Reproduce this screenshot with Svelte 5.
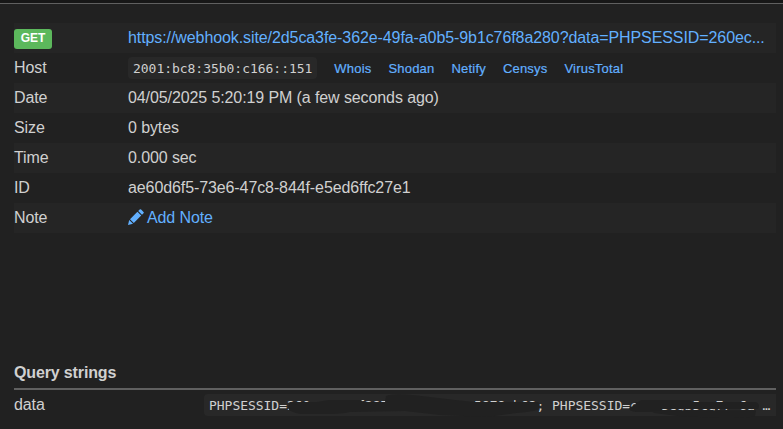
<script>
  const lookups = ['Whois', 'Shodan', 'Netify', 'Censys', 'VirusTotal'];
  const details = [
    ['Date', '04/05/2025 5:20:19 PM (a few seconds ago)'],
    ['Size', '0 bytes'],
    ['Time', '0.000 sec'],
    ['ID', 'ae60d6f5-73e6-47c8-844f-e5ed6ffc27e1']
  ];
  const value = 'PHPSESSID=260      f297   e       5979 b62; PHPSESSID=c  r5egb5cq7r 6a …';
</script>

<main>
  <div class="top"></div>
  <section class="details">
    <div class="row">
      <div class="label"><span class="badge">GET</span></div>
      <a class="url" href="#request">https://webhook.site/2d5ca3fe-362e-49fa-a0b5-9b1c76f8a280?data=PHPSESSID=260ec...</a>
    </div>
    <div class="row">
      <div class="label">Host</div>
      <div class="host">
        <code>2001:bc8:35b0:c166::151</code>
        {#each lookups as name}<a class="lookup" href="#lookup">{name}</a>{/each}
      </div>
    </div>
    {#each details as [label, text]}
      <div class="row"><div class="label">{label}</div><div>{text}</div></div>
    {/each}
    <div class="row">
      <div class="label">Note</div>
      <a class="note" href="#note">
        <svg width="16" height="16" viewBox="0 0 16 16" fill="currentColor"><path d="M0 16 1.2 11 5 14.8ZM2 10.2 9.4 2.8 13.2 6.6 5.8 14ZM10.2 2 11.7.5Q12.4-.2 13.1.5L15.5 2.9Q16.2 3.6 15.5 4.3L14 5.8Z"/></svg>
        <span>Add Note</span>
      </a>
    </div>
  </section>
  <section class="query">
    <h2>Query strings</h2>
    <div class="param">
      <div class="name">data</div>
      <div class="value">
        <code>{value}</code>
        <svg class="mask" width="572" height="30" viewBox="204 390 572 30" fill="#212121">
          <path d="M290 402 317 402 329 400 361 400 363 402 385 402 386 396Q392 393 413 395L430 397 455 400 475 402 538 402Q541 404 538 410Q529 412 516 413L488 417 440 415 405 411 350 412Q341 414 326 414L301 414Q289 412 288 408Z"/>
          <path d="M638 402 641 400 690 400 692 402 735 402 756 402Q761 405 758 409L662 409 660 412 636 412Q627 411 630 407Q638 405 635 402Z"/>
          <path d="M650 410.2 756 410.2 755 416Q750 418 720 418L678 416 654 413Z"/>
        </svg>
      </div>
    </div>
  </section>
</main>

<style>
  :global(body) { background: #212121; }
  main {
    height: 429px; overflow: hidden; background: #212121; color: #d0d0d0;
    font: 16px/30px "Liberation Sans", Arial, sans-serif; letter-spacing: -0.1px;
  }
  a { color: #62b0ff; text-decoration: none; }
  .top { height: 3px; background: #171717; border-bottom: 1px solid #606060; }
  .details { margin: 19px 7px 0 14px; }
  .row { display: grid; grid-template-columns: 114px 1fr; height: 30px; line-height: 29px; }
  .row:nth-child(odd) { background: #252525; }
  .url { white-space: nowrap; letter-spacing: -0.09px; }
  .badge {
    display: block; width: 38px; height: 20px; margin-top: 6px; border-radius: 3px;
    background: #5cb85c; color: #fff; font-size: 12px; font-weight: bold;
    line-height: 18px; text-align: center; letter-spacing: 0;
  }
  code {
    display: block; height: 22px; box-sizing: border-box; padding: 0 5px;
    border-radius: 4px; background: #282828; white-space: pre; letter-spacing: -0.03px;
    font: 13px/24px "DejaVu Sans Mono", monospace;
  }
  .host { display: flex; align-items: center; }
  .lookup { margin-left: 17px; font-size: 13px; letter-spacing: 0.2px; -webkit-text-stroke: 0.2px currentColor; }
  .note { display: flex; align-items: center; gap: 3px; height: 28px; line-height: 28px; }
  .note span { margin-top: 1px; }
  .query { margin: 125px 7px 0 14px; }
  h2 { height: 30px; margin: 0; border-bottom: 2px solid #606060; font-size: 16px; line-height: 30px; letter-spacing: -0.14px; }
  .param { display: grid; grid-template-columns: 190px 1fr; line-height: 29px; }
  .value { position: relative; padding-top: 4px; min-width: 0; }
  .value code { border-radius: 4px 0 0 4px; }
  .mask { position: absolute; left: 0; top: 0; }
</style>
